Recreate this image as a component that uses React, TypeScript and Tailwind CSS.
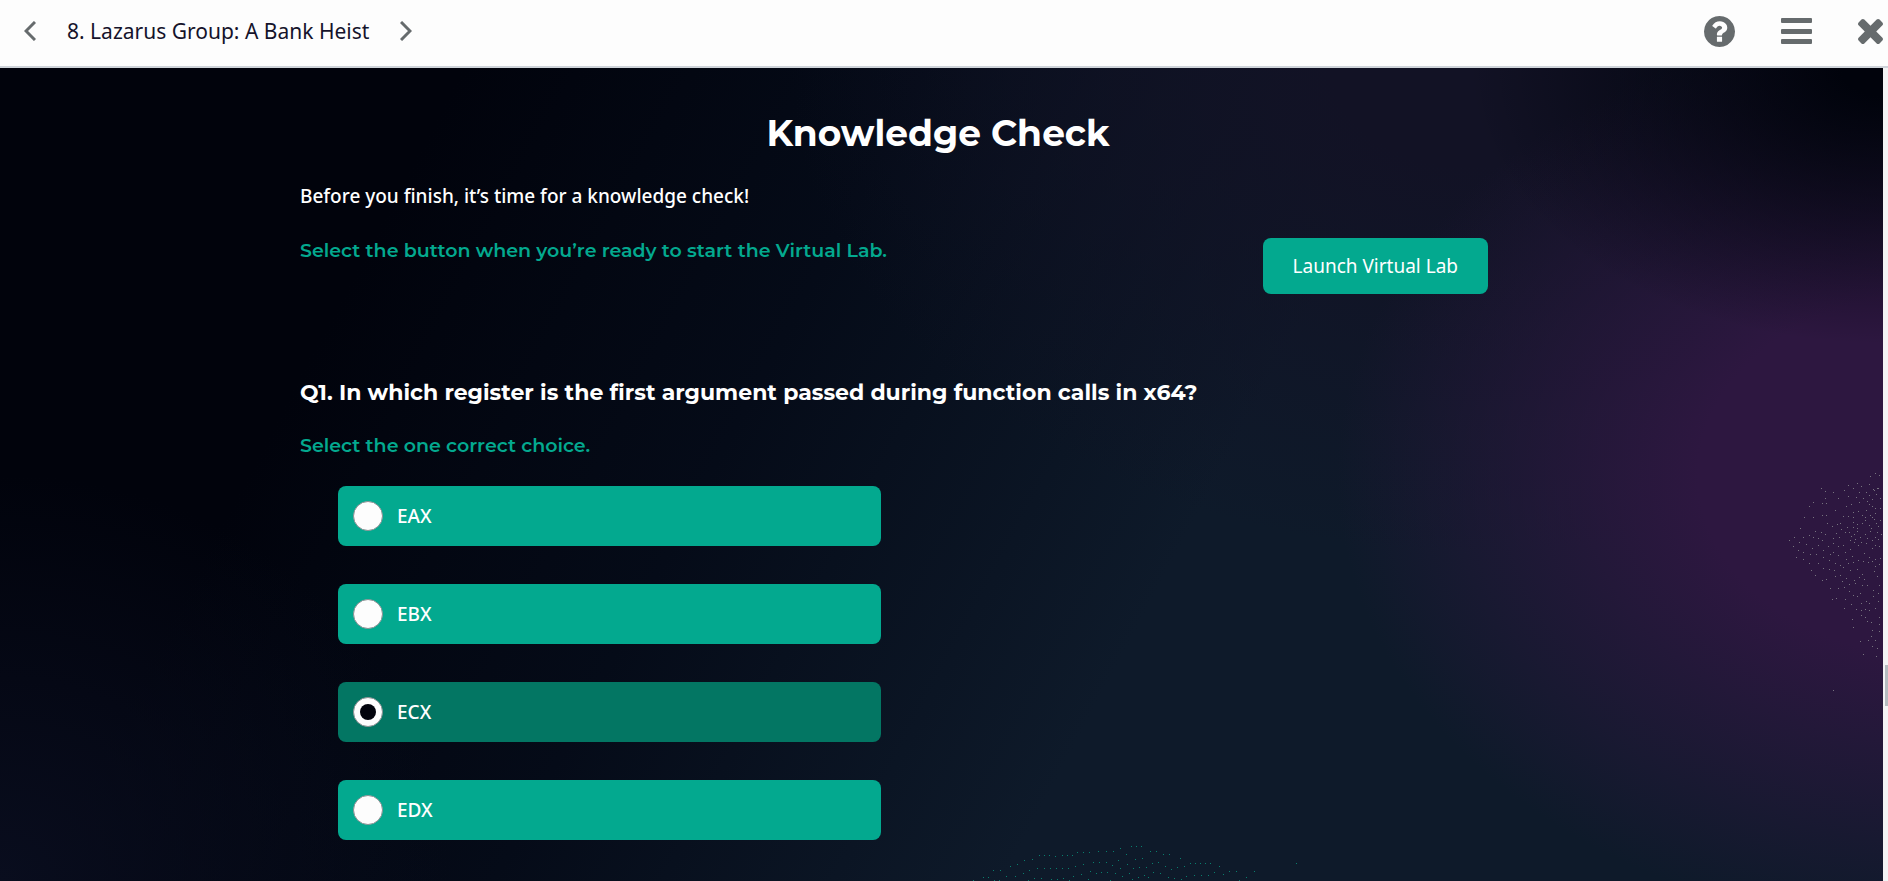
import { useState } from 'react'
import clsx from 'clsx'

const CHOICES = ['EAX', 'EBX', 'ECX', 'EDX']

const SIDE_DOTS =
  '235,33 230,36 239,35 217,43 208,45 221,46 229,44 233,49 237,48 181,48 185,51 193,52 204,50 213,48 219,52 226,52 234,50 236,54 238,48 185,58 198,58 208,56 216,57 223,58 229,55 232,59 240,58 173,62 169,66 182,63 186,63 206,66 211,64 219,62 227,61 229,64 232,66 235,68 240,68 164,77 173,77 182,75 186,75 195,70 203,76 208,76 213,77 213,72 218,71 222,75 225,77 226,70 230,75 232,77 235,73 240,80 160,88 187,83 192,86 197,84 200,83 201,89 207,87 213,82 213,87 217,84 217,88 222,83 225,80 229,85 231,88 234,79 236,83 238,86 149,100 154,97 159,102 163,97 169,95 173,97 175,91 178,98 181,92 185,94 182,100 193,98 196,93 199,97 205,92 209,92 210,100 211,96 214,94 215,99 217,91 220,97 221,102 225,94 227,98 230,91 232,100 235,97 237,92 238,99 241,94 153,106 158,110 156,117 163,112 163,119 166,104 170,114 172,108 176,114 178,105 183,110 183,117 188,106 190,114 193,103 193,112 198,106 198,115 203,105 205,112 210,109 212,116 214,102 218,105 224,113 226,103 229,117 232,108 235,105 235,119 239,106 240,118 169,123 171,130 175,135 178,123 183,128 189,120 189,129 194,130 195,123 200,125 203,127 206,119 208,123 210,130 213,122 217,129 218,120 223,121 228,122 232,121 235,126 234,131 239,124 237,136 182,140 186,139 190,148 195,136 198,148 200,135 202,141 204,147 206,138 209,144 214,140 215,143 219,137 222,134 224,139 222,145 227,145 239,145 192,159 196,158 205,159 209,151 213,155 217,156 220,153 221,163 226,161 229,163 233,150 233,156 238,153 238,161 204,168 211,164 216,169 221,170 225,169 229,170 235,168 212,179 221,175 225,177 227,181 231,182 239,177 213,187 232,190 239,184 239,191 220,201 228,200 231,196 235,200 232,206 237,208 223,214 236,216 193,250'

const WAVE_DOTS =
  '31,60 41,57 46,57 51,50 58,50 52,60 57,60 64,56 68,46 73,56 75,44 81,53 82,40 87,50 90,39 86,60 92,58 95,48 97,35 99,58 102,48 102,35 107,35 108,48 109,59 113,36 115,59 114,48 120,35 120,48 121,58 125,35 126,48 127,60 130,35 131,56 133,46 135,32 139,54 141,44 141,32 146,59 147,32 148,51 151,42 154,53 156,31 157,42 159,52 164,31 164,42 165,52 168,60 170,45 171,31 173,53 176,40 178,28 178,48 180,56 184,34 185,44 187,53 189,26 190,59 191,48 193,39 194,26 196,57 197,47 199,26 200,38 202,55 204,47 206,57 208,31 210,43 211,52 214,31 216,42 218,53 221,34 223,46 226,57 227,34 229,49 232,58 235,47 238,38 239,59 242,46 244,56 248,43 252,55 253,43 258,43 259,55 263,43 266,55 268,43 272,52 277,46 281,54 287,51 294,51 297,60 304,57 312,51 354,43'

const Dots = ({ points, size, className }: { points: string; size: [number, number]; className: string }): JSX.Element => (
  <svg aria-hidden="true" width={size[0]} height={size[1]} fill="currentColor" className={clsx('pointer-events-none absolute', className)}>
    {points.split(' ').map((point) => {
      const [x, y] = point.split(',')
      return <rect key={point} x={x} y={y} width="1" height="1" />
    })}
  </svg>
)

const Header = (): JSX.Element => (
  <header className="flex h-[68px] shrink-0 items-center justify-between border-b-2 border-[#cfd4da] bg-[#fdfdfd] pb-1 pl-5 text-[#666b6d]">
    <nav className="flex items-center gap-[27px]">
      <button type="button" aria-label="Previous" className="p-1">
        <svg width="12" height="20" viewBox="0 0 12 20" fill="none" stroke="currentColor" strokeWidth="3">
          <path d="M11 1L2 10L11 19" />
        </svg>
      </button>
      <span className="pt-0.5 text-[21px] text-[#15132b]">8. Lazarus Group: A Bank Heist</span>
      <button type="button" aria-label="Next" className="p-1">
        <svg width="12" height="20" viewBox="0 0 12 20" fill="none" stroke="currentColor" strokeWidth="3">
          <path d="M1 1L10 10L1 19" />
        </svg>
      </button>
    </nav>

    <div className="flex items-center gap-[46px] pr-[5px]">
      <button type="button" aria-label="Help">
        <svg width="31" height="31" viewBox="128 128 1536 1536" fill="currentColor">
          <path d="M1024 1376v-192q0-14-9-23t-23-9h-192q-14 0-23 9t-9 23v192q0 14 9 23t23 9h192q14 0 23-9t9-23zm256-672q0-88-55.5-163t-138.5-116-170-41q-243 0-371 213-15 24 8 42l132 100q7 6 19 6 16 0 25-12 53-68 86-92 34-24 86-24 48 0 85.5 26t37.5 59q0 38-20 61t-68 45q-63 28-115.5 86.5t-52.5 125.5v36q0 14 9 23t23 9h192q14 0 23-9t9-23q0-19 21.5-49.5t54.5-49.5q32-18 49-28.5t46-35 44.5-48 28-60.5 12.5-81zm384 192q0 209-103 385.5t-279.5 279.5-385.5 103-385.5-103-279.5-279.5-103-385.5 103-385.5 279.5-279.5 385.5-103 385.5 103 279.5 279.5 103 385.5z" />
        </svg>
      </button>
      <button type="button" aria-label="Menu">
        <svg width="31" height="26" viewBox="0 0 31 26" fill="currentColor">
          <rect width="31" height="5" rx="1" />
          <rect y="11" width="31" height="5" rx="1" />
          <rect y="21" width="31" height="5" rx="1" />
        </svg>
      </button>
      <button type="button" aria-label="Close">
        <svg width="25" height="25" viewBox="302 366 1188 1188" fill="currentColor">
          <path d="M1490 1322q0 40-28 68l-136 136q-28 28-68 28t-68-28l-294-294-294 294q-28 28-68 28t-68-28l-136-136q-28-28-28-68t28-68l294-294-294-294q-28-28-28-68t28-68l136-136q28-28 68-28t68 28l294 294 294-294q28-28 68-28t68 28l136 136q28 28 28 68t-28 68l-294 294 294 294q28 28 28 68z" />
        </svg>
      </button>
    </div>
  </header>
)

const Choices = (): JSX.Element => {
  const [answer, setAnswer] = useState('ECX')

  return (
    <div role="radiogroup" aria-label="Question 1" className="mt-[27px] ml-[38px] flex max-w-[543px] flex-col gap-[38px]">
      {CHOICES.map((choice) => (
        <label
          key={choice}
          className={clsx(
            'flex h-[60px] items-center gap-[14px] rounded-lg pl-[15px] text-[19px] font-medium',
            answer === choice ? 'bg-[#037663]' : 'bg-[#03a98f]'
          )}
        >
          <input
            type="radio"
            name="q1"
            value={choice}
            checked={answer === choice}
            onChange={() => setAnswer(choice)}
            className="grid size-[30px] appearance-none place-content-center rounded-full border border-[#8a8f92] bg-[#fdfdfd] before:size-4 before:rounded-full checked:before:bg-[#01030c]"
          />
          {choice}
        </label>
      ))}
    </div>
  )
}

export default function App() {
  return (
    <div className="flex h-screen flex-col overflow-hidden font-['Noto_Sans',sans-serif]">
      <Header />

      <div className="flex min-h-0 flex-1">
        <main className="relative min-w-0 flex-1 overflow-hidden bg-[radial-gradient(ellipse_22%_34%_at_100%_0%,#01030c_10%,transparent),radial-gradient(ellipse_32%_56%_at_103%_50%,#2d1740_40%,transparent),radial-gradient(ellipse_36%_60%_at_78%_0%,#121225_20%,transparent),radial-gradient(ellipse_24%_50%_at_0%_100%,#090d1e,transparent),linear-gradient(118deg,#01030c_20%,#050b18_40%,#0e1a2a_62%)] pt-10 pr-[307px] pl-[300px] text-white">
          <Dots points={SIDE_DOTS} size={[243, 260]} className="top-[372px] right-0 text-[#77737f]" />
          <Dots points={WAVE_DOTS} size={[400, 61]} className="bottom-0 left-1/2 text-[#087e6d]" />

          <h1 className="text-center font-['Montserrat','Open_Sans',sans-serif] text-4xl leading-[50px] font-bold">Knowledge Check</h1>
          <p className="mt-[23px] text-[19px] leading-[30px] font-medium">Before you finish, it’s time for a knowledge check!</p>

          <div className="mt-[27px] flex items-start justify-between pr-[88px]">
            <p className="font-['Montserrat','Open_Sans',sans-serif] text-[19px] leading-[26px] font-semibold text-[#03a98f]">
              Select the button when you’re ready to start the Virtual Lab.
            </p>
            <button type="button" className="h-14 rounded-lg bg-[#03a98f] px-[30px] text-[19px]">
              Launch Virtual Lab
            </button>
          </div>

          <h2 className="mt-[83px] font-['Montserrat','Open_Sans',sans-serif] text-[22px] leading-8 font-bold">
            Q1. In which register is the first argument passed during function calls in x64?
          </h2>
          <p className="mt-6 font-['Montserrat','Open_Sans',sans-serif] text-[19px] leading-[26px] font-semibold text-[#03a98f]">
            Select the one correct choice.
          </p>
          <Choices />
        </main>

        <div aria-hidden="true" className="flex w-[5px] flex-col items-end bg-[#f3f3f4] pt-[597px]">
          <div className="h-[41px] w-[3px] bg-[#b5bcc0]" />
        </div>
      </div>
    </div>
  )
}
